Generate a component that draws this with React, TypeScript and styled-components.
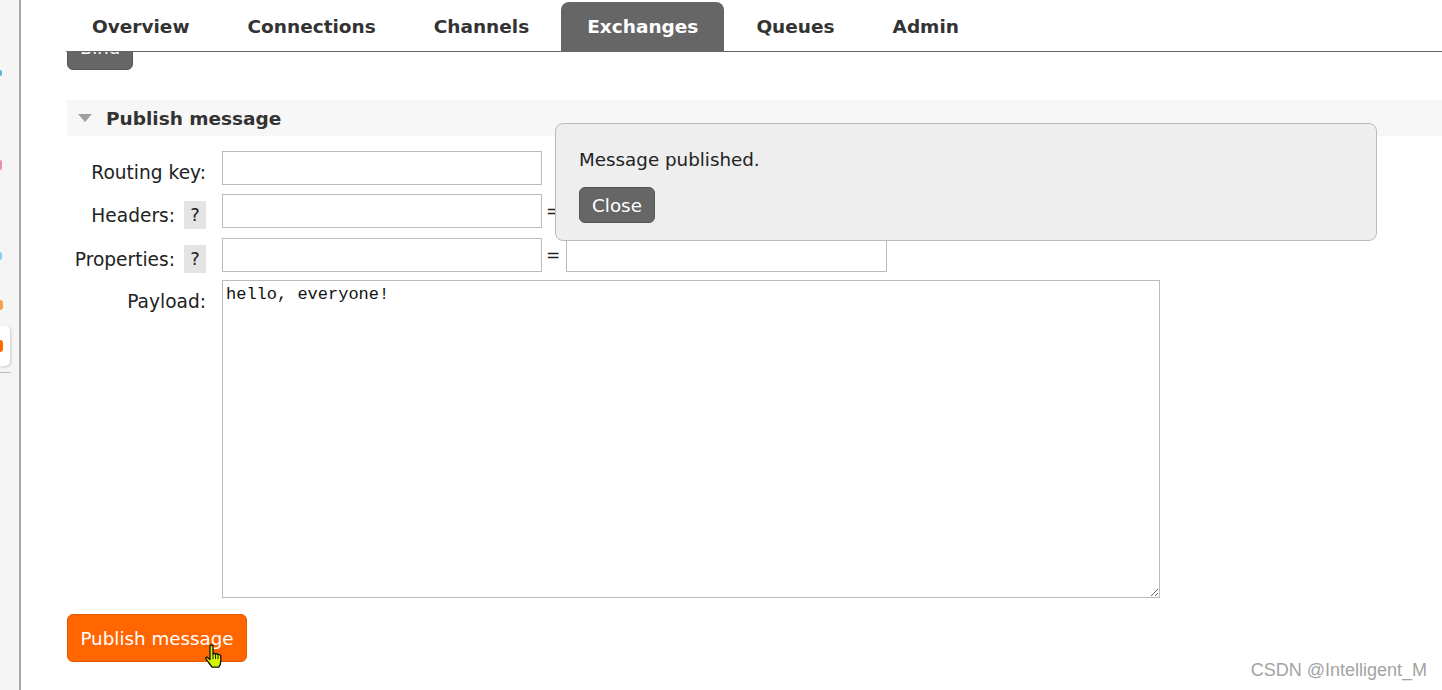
import React, { useState } from "react";
import styled, { createGlobalStyle } from "styled-components";

const GlobalStyle = createGlobalStyle`
  html, body {
    margin: 0;
    padding: 0;
    background: #ffffff;
    overflow: hidden;
  }
  body {
    font-family: "DejaVu Sans", Verdana, sans-serif;
    color: #333333;
  }
`;

const Shell = styled.div`
  display: flex;
  width: 1442px;
  height: 690px;
`;

const SideStrip = styled.div`
  width: 19px;
  background: #f5f5f5;
  display: flex;
  flex-direction: column;
  align-items: flex-start;
`;

const StripMark = styled.div<{ $top: number; $h: number; $w?: number; $color: string }>`
  margin-top: ${(p) => p.$top}px;
  width: ${(p) => p.$w ?? 2}px;
  height: ${(p) => p.$h}px;
  background: ${(p) => p.$color};
  border-radius: 0 3px 3px 0;
`;

const StripCard = styled.div`
  margin-top: 16px;
  width: 10px;
  height: 40px;
  background: #ffffff;
  border-radius: 0 5px 5px 0;
  box-shadow: 1px 1px 3px rgba(0, 0, 0, 0.18);
  display: flex;
  align-items: center;
`;

const StripRule = styled.div`
  margin-top: 6px;
  width: 11px;
  height: 1px;
  background: #bbbbbb;
`;

const Divider = styled.div`
  width: 2px;
  background: #a9a9a9;
`;

const Main = styled.div`
  flex: 1;
  position: relative;
  display: flex;
  flex-direction: column;
  overflow: hidden;
`;

const Header = styled.nav`
  margin-left: 45px;
  height: 51px;
  border-bottom: 1px solid #666666;
  display: flex;
  align-items: flex-end;
`;

const Tab = styled.a<{ $active?: boolean }>`
  height: 49px;
  line-height: 49px;
  padding: 0 26px;
  margin-right: 6px;
  font-size: 18.5px;
  font-weight: 700;
  color: ${(p) => (p.$active ? "#ffffff" : "#333333")};
  background: ${(p) => (p.$active ? "#666666" : "transparent")};
  border-radius: 8px 8px 0 0;
  cursor: pointer;
`;

const Content = styled.div`
  flex: 1;
  overflow: hidden;
  padding-left: 46px;
`;

const BindButton = styled.button`
  display: block;
  margin-top: -18px;
  width: 66px;
  height: 36px;
  padding: 0 0 8px;
  border: 1px solid #555555;
  border-radius: 6px;
  background: #666666;
  color: #ffffff;
  font-family: "DejaVu Sans", Verdana, sans-serif;
  font-size: 18px;
  line-height: 20px;
`;

const SectionHeader = styled.div`
  margin-top: 30px;
  height: 36px;
  background: #f7f7f7;
  display: flex;
  align-items: center;
  padding-left: 11px;
  gap: 14px;
  font-size: 18.5px;
  font-weight: 700;
  color: #333333;
`;

const Triangle = styled.span`
  width: 0;
  height: 0;
  border-left: 7px solid transparent;
  border-right: 7px solid transparent;
  border-top: 8px solid #a0a0a0;
`;

const Form = styled.div`
  margin-top: 15px;
  display: grid;
  grid-template-columns: 139px auto;
  column-gap: 16px;
  row-gap: 9px;
  align-items: start;
  justify-content: start;
`;

const LabelCell = styled.div<{ $pull?: number }>`
  display: flex;
  justify-content: flex-end;
  align-items: flex-start;
  margin-top: ${(p) => -(p.$pull ?? 0)}px;
`;

const Label = styled.label`
  padding-top: 10px;
  font-size: 18.6px;
  line-height: 24px;
  color: #222222;
  white-space: nowrap;
`;

const Help = styled.span`
  margin-top: 7px;
  margin-left: 9px;
  width: 22px;
  height: 28px;
  line-height: 28px;
  text-align: center;
  background: #e4e4e4;
  font-size: 18px;
  color: #222222;
`;

const FieldCell = styled.div<{ $pull?: number }>`
  display: flex;
  align-items: center;
  margin-top: ${(p) => -(p.$pull ?? 0)}px;
`;

const TextInput = styled.input<{ $w?: number }>`
  box-sizing: border-box;
  width: ${(p) => p.$w ?? 320}px;
  height: 34px;
  border: 1px solid #bbbbbb;
  padding: 2px 4px;
  font-size: 16px;
  background: #ffffff;
  outline: none;
`;

const Equals = styled.span`
  width: 22px;
  text-align: center;
  padding-right: 2px;
  font-size: 17px;
  color: #222222;
`;

const Payload = styled.textarea`
  box-sizing: border-box;
  width: 938px;
  height: 318px;
  border: 1px solid #bbbbbb;
  padding: 4px 3px;
  font-family: "Liberation Mono", "Noto Sans CJK SC", monospace;
  font-size: 17px;
  line-height: 20px;
  color: #111111;
  resize: both;
  outline: none;
`;

const PublishButton = styled.button`
  display: block;
  margin-top: 16px;
  width: 180px;
  height: 48px;
  border: 1px solid #e25a00;
  border-radius: 6px;
  background: #ff6600;
  color: #ffffff;
  font-family: "DejaVu Sans", Verdana, sans-serif;
  font-size: 18.3px;
  cursor: pointer;
`;

const Popup = styled.div`
  position: absolute;
  left: 534px;
  top: 123px;
  box-sizing: border-box;
  width: 822px;
  height: 118px;
  padding: 24px 23px 0;
  background: #eeeeee;
  border: 1px solid #bbbbbb;
  border-radius: 8px;
`;

const PopupText = styled.p`
  margin: 0;
  font-size: 18.3px;
  line-height: 24px;
  color: #222222;
`;

const CloseButton = styled.button`
  display: block;
  margin-top: 15px;
  width: 76px;
  height: 36px;
  padding: 0;
  border: 1px solid #555555;
  border-radius: 6px;
  background: #666666;
  color: #ffffff;
  font-family: "DejaVu Sans", Verdana, sans-serif;
  font-size: 18.3px;
  cursor: pointer;
`;

const Cursor = styled.svg`
  position: absolute;
  left: 183px;
  top: 644px;
`;

const Watermark = styled.div`
  position: absolute;
  right: 15px;
  bottom: 10px;
  font-family: "Liberation Sans", Arial, sans-serif;
  font-size: 18px;
  line-height: 20px;
  color: #a3a3a3;
`;

const tabs = ["Overview", "Connections", "Channels", "Exchanges", "Queues", "Admin"];

const App = () => {
  const [payload, setPayload] = useState("hello, everyone!");
  const [open, setOpen] = useState(true);

  return (
    <Shell>
      <GlobalStyle />
      <SideStrip>
        <StripMark $top={70} $h={6} $color="#5aaee0" />
        <StripMark $top={84} $h={10} $color="#e98fad" />
        <StripMark $top={82} $h={8} $color="#80d4ef" />
        <StripMark $top={40} $h={10} $w={3} $color="#f7a045" />
        <StripCard>
          <StripMark $top={0} $h={12} $w={3} $color="#ff6a00" />
        </StripCard>
        <StripRule />
      </SideStrip>
      <Divider />
      <Main>
        <Header>
          {tabs.map((t) => (
            <Tab key={t} $active={t === "Exchanges"}>
              {t}
            </Tab>
          ))}
        </Header>
        <Content>
          <BindButton>Bind</BindButton>
          <SectionHeader>
            <Triangle />
            Publish message
          </SectionHeader>
          <Form>
            <LabelCell>
              <Label>Routing key:</Label>
            </LabelCell>
            <FieldCell>
              <TextInput />
            </FieldCell>

            <LabelCell>
              <Label>Headers:</Label>
              <Help>?</Help>
            </LabelCell>
            <FieldCell>
              <TextInput />
              <Equals>=</Equals>
              <TextInput $w={321} />
            </FieldCell>

            <LabelCell>
              <Label>Properties:</Label>
              <Help>?</Help>
            </LabelCell>
            <FieldCell>
              <TextInput />
              <Equals>=</Equals>
              <TextInput $w={321} />
            </FieldCell>

            <LabelCell $pull={2}>
              <Label>Payload:</Label>
            </LabelCell>
            <FieldCell $pull={2}>
              <Payload value={payload} onChange={(e) => setPayload(e.target.value)} />
            </FieldCell>
          </Form>
          <PublishButton onClick={() => setOpen(true)}>Publish message</PublishButton>
        </Content>

        {open && (
          <Popup>
            <PopupText>Message published.</PopupText>
            <CloseButton onClick={() => setOpen(false)}>Close</CloseButton>
          </Popup>
        )}

        <Cursor width="20" height="25" viewBox="0 0 20 25">
          <path
            d="M6 1.5 Q7.5 0.5 9 1.5 V10 Q10.3 9 11.5 10 Q12.8 9.2 14 10.6 Q15.6 10 16.8 11.8 V17 Q16.8 20.5 14.8 23.2 H8 Q6.5 21 4.2 18 L1.8 14.6 Q1.4 12.8 3.2 13.2 L6 15.6 Z"
            fill="#d2f500"
            stroke="#111111"
            strokeWidth="1.3"
            strokeLinejoin="round"
          />
          <path d="M9 10 V15 M11.5 10 V15 M14 10.6 V15" stroke="#111111" strokeWidth="0.9" />
        </Cursor>

        <Watermark>CSDN @Intelligent_M</Watermark>
      </Main>
    </Shell>
  );
};

export default App;
